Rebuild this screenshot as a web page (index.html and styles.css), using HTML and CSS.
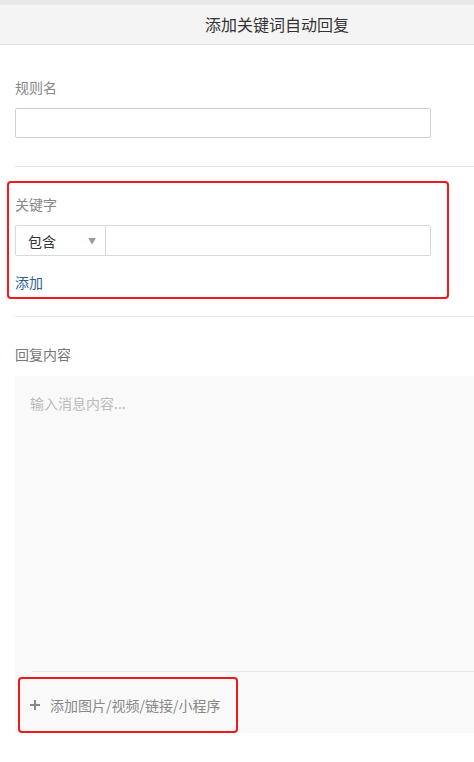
FILE: index.html
```html
<!DOCTYPE html>
<html lang="zh-CN">
<head>
  <meta charset="UTF-8" />
  <meta name="viewport" content="width=device-width, initial-scale=1.0"/>
  <title>添加关键词自动回复</title>
  <link rel="stylesheet" href="styles.css">
</head>
<body>
  <header>
    <h1>添加关键词自动回复</h1>
  </header>

  <main class="form">
    <div class="field">
      <label class="field-label">规则名</label>
      <input class="text-input" type="text">
    </div>

    <div class="field field-keyword">
      <div class="mark">
        <label class="field-label">关键字</label>
        <div class="keyword-row">
          <div class="select">
            <span>包含</span>
            <span class="caret">▼</span>
          </div>
          <input class="keyword-input" type="text">
        </div>
        <a class="add-link" href="#">添加</a>
      </div>
    </div>

    <div class="field field-reply">
      <label class="field-label dark">回复内容</label>
      <div class="editor">
        <div class="editor-input">输入消息内容...</div>
        <div class="editor-bar">
          <div class="attach">
            <svg width="10" height="10" viewBox="0 0 10 10"><path d="M5 0v10M0 5h10" stroke="#888" stroke-width="2"/></svg>
            <span>添加图片/视频/链接/小程序</span>
          </div>
        </div>
      </div>
    </div>
  </main>
</body>
</html>
```

FILE: styles.css
```css
:root {
  --text: #333;
  --label: #888;
  --line: #e6e6e6;
  --mark: #f01818;
  --link: #2f5f92;
}

body {
  margin: 0;
  font-family: "Noto Sans CJK SC", "Noto Sans", sans-serif;
  font-size: 14px;
  color: var(--text);
  background: #fff;
}

header {
  background: #f4f4f4;
  border-top: 5px solid #e8e8e8;
  border-bottom: 1px solid #e0e0e0;
}

h1 {
  margin: 0;
  height: 39px;
  line-height: 39px;
  padding-left: 80px;
  text-align: center;
  font-size: 16px;
  font-weight: normal;
  color: #333;
}

.form {
  padding-left: 15px;
}

.field {
  padding: 32px 43px 28px 0;
  border-bottom: 1px solid var(--line);
}

.field-label {
  display: block;
  line-height: 20px;
  color: var(--label);
}

.field-label.dark {
  color: #777;
}

.text-input {
  display: block;
  box-sizing: border-box;
  width: 100%;
  height: 30px;
  margin-top: 11px;
  border: 1px solid #cfcfcf;
  border-radius: 2px;
  outline: none;
}

.field-keyword {
  padding-top: 14px;
  padding-bottom: 17px;
}

.mark {
  margin: 0 -18px 0 -8px;
  padding: 11px 16px 5px 6px;
  border: 2px solid var(--mark);
  border-radius: 4px;
}

.keyword-row {
  display: flex;
  height: 29px;
  margin-top: 11px;
  border: 1px solid #d9d9d9;
  border-radius: 2px;
}

.select {
  display: flex;
  align-items: center;
  justify-content: space-between;
  width: 90px;
  padding: 0 9px 0 12px;
  box-sizing: border-box;
  border-right: 1px solid #d9d9d9;
  color: #333;
}

.caret {
  font-size: 8px;
  color: #999;
}

.keyword-input {
  flex: 1;
  border: none;
  outline: none;
}

.add-link {
  display: block;
  margin-top: 16px;
  line-height: 20px;
  color: var(--link);
  text-decoration: none;
}

.field-reply {
  padding: 27px 0 0 0;
  border-bottom: none;
}

.editor {
  margin-top: 12px;
  background: #f9f9f9;
}

.editor-input {
  height: 278px;
  padding: 17px 15px 0;
  line-height: 20px;
  color: #bbb;
}

.editor-bar {
  margin-left: 17px;
  padding-top: 5px;
  border-top: 1px solid #e8e8e8;
}

.attach {
  display: flex;
  align-items: center;
  gap: 10px;
  box-sizing: border-box;
  width: 220px;
  height: 56px;
  margin-left: -14px;
  padding-left: 10px;
  border: 2px solid var(--mark);
  border-radius: 4px;
  color: #888;
}
```
